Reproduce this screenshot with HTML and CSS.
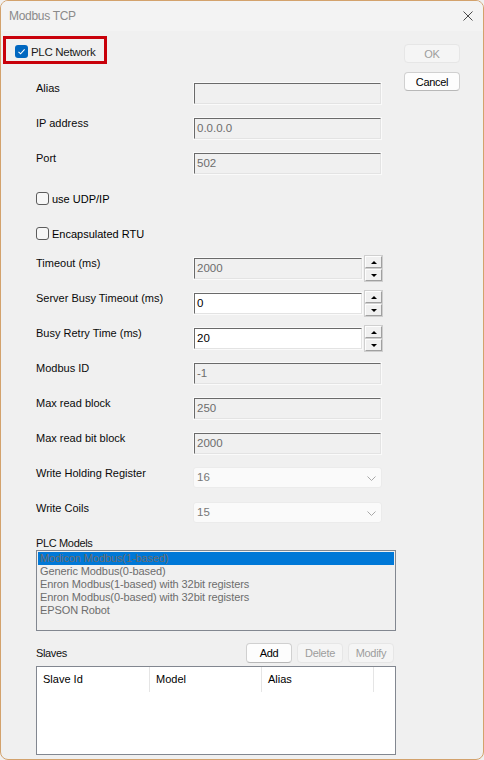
FILE: index.html
```html
<!DOCTYPE html>
<html lang="en">
<head>
    <meta charset="UTF-8">
    <title>Modbus TCP</title>
    <link rel="stylesheet" href="styles.css">
</head>
<body>
    <div class="window">
        <div class="titlebar">
            <span class="title">Modbus TCP</span>
            <svg class="close" width="10" height="10" viewBox="0 0 10 10">
                <path d="M0.5 0.5 L9.5 9.5 M9.5 0.5 L0.5 9.5" stroke="#4a4a4a" stroke-width="1" fill="none"/>
            </svg>
        </div>

        <div class="content">
            <div class="form">
                <div class="plc-net">
                    <span class="check on">
                        <svg width="13" height="13" viewBox="0 0 13 13"><path d="M3.5 6.8 L5.6 8.8 L9.6 4.4" stroke="#fff" stroke-width="1.1" fill="none"/></svg>
                    </span>
                    <span class="plc-text">PLC Network</span>
                </div>

                <div class="row"><span class="lbl">Alias</span><div class="field"></div></div>
                <div class="row"><span class="lbl">IP address</span><div class="field">0.0.0.0</div></div>
                <div class="row"><span class="lbl">Port</span><div class="field">502</div></div>

                <div class="chk-row"><span class="check"></span><span class="chk-text">use UDP/IP</span></div>
                <div class="chk-row"><span class="check"></span><span class="chk-text">Encapsulated RTU</span></div>

                <div class="row">
                    <span class="lbl">Timeout (ms)</span>
                    <div class="spin">
                        <div class="field">2000</div>
                        <div class="spin-btns"><span class="sb up"></span><span class="sb down"></span></div>
                    </div>
                </div>
                <div class="row">
                    <span class="lbl">Server Busy Timeout (ms)</span>
                    <div class="spin">
                        <div class="field active">0</div>
                        <div class="spin-btns"><span class="sb up"></span><span class="sb down"></span></div>
                    </div>
                </div>
                <div class="row">
                    <span class="lbl">Busy Retry Time (ms)</span>
                    <div class="spin">
                        <div class="field active">20</div>
                        <div class="spin-btns"><span class="sb up"></span><span class="sb down"></span></div>
                    </div>
                </div>

                <div class="row"><span class="lbl">Modbus ID</span><div class="field">-1</div></div>
                <div class="row"><span class="lbl">Max read block</span><div class="field">250</div></div>
                <div class="row"><span class="lbl">Max read bit block</span><div class="field">2000</div></div>

                <div class="row">
                    <span class="lbl">Write Holding Register</span>
                    <div class="combo">16<svg class="chev" width="9" height="5" viewBox="0 0 9 5"><path d="M0.5 0.5 L4.5 4.5 L8.5 0.5" stroke="#a8a8a8" fill="none"/></svg></div>
                </div>
                <div class="row">
                    <span class="lbl">Write Coils</span>
                    <div class="combo">15<svg class="chev" width="9" height="5" viewBox="0 0 9 5"><path d="M0.5 0.5 L4.5 4.5 L8.5 0.5" stroke="#a8a8a8" fill="none"/></svg></div>
                </div>

                <div class="sect">PLC Models</div>
                <div class="listbox">
                    <div class="item sel">Modicon Modbus(1-based)</div>
                    <div class="item">Generic Modbus(0-based)</div>
                    <div class="item">Enron Modbus(1-based) with 32bit registers</div>
                    <div class="item">Enron Modbus(0-based) with 32bit registers</div>
                    <div class="item">EPSON Robot</div>
                </div>

                <div class="slaves-bar">
                    <span class="sect">Slaves</span>
                    <div class="btns">
                        <button class="btn">Add</button>
                        <button class="btn" disabled>Delete</button>
                        <button class="btn" disabled>Modify</button>
                    </div>
                </div>
                <div class="listview">
                    <div class="lv-head">
                        <span class="col">Slave Id</span>
                        <span class="col">Model</span>
                        <span class="col">Alias</span>
                    </div>
                </div>
            </div>

            <div class="side">
                <button class="btn wide" disabled>OK</button>
                <button class="btn wide">Cancel</button>
            </div>
        </div>
    </div>
</body>
</html>
```

FILE: styles.css
```css
body {
    margin: 0;
    background: #f0f0f0;
    font-family: "Liberation Sans", Arial, sans-serif;
    font-size: 11px;
    color: #000;
}
.window {
    box-sizing: border-box;
    width: 484px;
    height: 760px;
    border: 1px solid #d3a26c;
    border-radius: 8px;
    background: #f0f0f0;
    overflow: hidden;
}
.titlebar {
    height: 30px;
    background: #f3f3f3;
    display: flex;
    align-items: center;
    padding: 0 9px 0 8px;
}
.title {
    flex: 1;
    font-size: 12px;
    letter-spacing: -0.3px;
    color: #8a8a8a;
}
.close {
    margin-right: 1px;
}
.content {
    display: flex;
    padding-left: 35px;
}
.form {
    width: 360px;
}
.side {
    margin-left: 8px;
    padding-top: 13px;
    display: flex;
    flex-direction: column;
    gap: 9px;
}

/* PLC Network (highlighted) */
.plc-net {
    box-sizing: border-box;
    margin: 5px 0 17px -33px;
    width: 104px;
    height: 28px;
    border: 3px solid #c8000a;
    display: flex;
    align-items: center;
    padding: 3px 0 0 9px;
}
.plc-text {
    margin-left: 3px;
    font-size: 11.5px;
    letter-spacing: -0.3px;
    color: #1b1b1b;
}
.check {
    box-sizing: border-box;
    width: 13px;
    height: 13px;
    border: 1px solid #5c5c5c;
    border-radius: 3px;
    background: #f7f7f7;
    flex: none;
}
.check.on {
    border: none;
    background: #0067c0;
}
.check.on svg {
    display: block;
}

/* rows */
.row {
    display: grid;
    grid-template-columns: 157px 189px;
    height: 35px;
}
.lbl {
    line-height: 14px;
    color: #0a0a0a;
}
.field {
    box-sizing: border-box;
    margin: 2px 1px 0;
    height: 21px;
    border: 1px solid;
    border-color: #6a6a6a #e3e3e3 #e3e3e3 #6a6a6a;
    box-shadow: 0 0 0 1px #fafafa;
    background: #f0f0f0;
    color: #6d6d6d;
    padding-left: 2px;
    font-size: 11.5px;
    line-height: 19px;
}
.field.active {
    background: #fff;
    color: #000;
}
.spin {
    display: flex;
    align-items: flex-start;
}
.spin .field {
    width: 168px;
}
.spin-btns {
    margin: 0 0 0 2px;
    display: flex;
    flex-direction: column;
    gap: 1px;
}
.sb {
    box-sizing: border-box;
    width: 17px;
    height: 12px;
    border: 1px solid;
    border-color: #fdfdfd #a0a0a0 #a0a0a0 #fdfdfd;
    box-shadow: 0 0 0 1px #cfcfcf;
    background: #f0f0f0;
    display: flex;
    align-items: center;
    justify-content: center;
}
.sb::after {
    content: "";
    border-left: 3px solid transparent;
    border-right: 3px solid transparent;
}
.sb.up::after {
    border-bottom: 3px solid #000;
}
.sb.down::after {
    border-top: 3px solid #000;
}
.chk-row {
    box-sizing: border-box;
    height: 35px;
    display: flex;
    align-items: flex-start;
    padding-top: 6px;
}
.chk-text {
    margin-left: 3px;
    line-height: 14px;
}
.combo {
    box-sizing: border-box;
    margin-top: 1px;
    height: 21px;
    border: 1px solid #ebebeb;
    border-radius: 3px;
    background: #fafafa;
    color: #777;
    padding: 0 5px 0 3px;
    font-size: 11.5px;
    line-height: 19px;
    display: flex;
    justify-content: space-between;
    align-items: center;
}
.chev {
    margin-top: 2px;
}

/* PLC models */
.sect {
    font-size: 11px;
    letter-spacing: -0.35px;
    line-height: 14px;
    color: #111;
}
.listbox {
    box-sizing: border-box;
    height: 81px;
    border: 1px solid #828790;
    background: #f0f0f0;
    padding: 1px;
}
.item {
    height: 13px;
    line-height: 13px;
    padding-left: 2px;
    color: #6d6d6d;
    letter-spacing: -0.1px;
}
.item.sel {
    background: #0078d7;
}

/* slaves */
.slaves-bar {
    margin-top: 12px;
    height: 20px;
    display: flex;
    align-items: center;
    justify-content: space-between;
    padding-right: 2px;
}
.btns {
    display: flex;
    gap: 5px;
}
.btn {
    box-sizing: border-box;
    width: 46px;
    height: 20px;
    padding: 0;
    border: 1px solid #d0d0d0;
    border-bottom-color: #b8b8b8;
    border-radius: 4px;
    background: #fdfdfd;
    font-family: "Liberation Sans", Arial, sans-serif;
    font-size: 11px;
    letter-spacing: -0.3px;
    color: #000;
}
.btn:disabled {
    border-color: #e6e6e6;
    background: #f5f5f5;
    color: #9d9d9d;
}
.btn.wide {
    width: 56px;
    height: 19px;
}
.listview {
    box-sizing: border-box;
    margin-top: 3px;
    height: 89px;
    border: 1px solid #828790;
    background: #fff;
}
.lv-head {
    display: flex;
    height: 25px;
}
.col {
    box-sizing: border-box;
    width: 112px;
    padding-left: 6px;
    line-height: 25px;
    border-right: 1px solid #e5e5e5;
    color: #000;
}
.col:first-child {
    width: 113px;
}
```
